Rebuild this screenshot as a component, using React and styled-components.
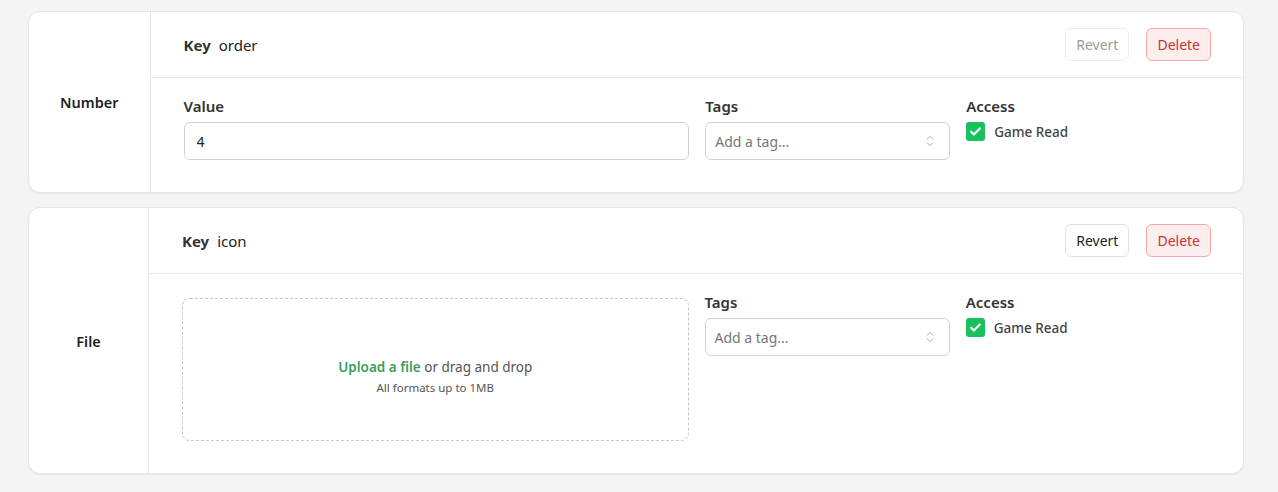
import React from 'react';
import styled, { createGlobalStyle } from 'styled-components';
import { ChevronsUpDown } from 'lucide-react';

const GlobalStyle = createGlobalStyle`
  body {
    margin: 0;
    background: #f4f4f4;
    font-family: "Noto Sans", "Open Sans", sans-serif;
    color: #333;
  }
`;

const Page = styled.div`
  display: flex;
  flex-direction: column;
  gap: 14px;
  padding: 11px 34px 18px 28px;
`;

const Card = styled.div`
  display: flex;
  background: #fff;
  border: 1px solid #e6e6e6;
  border-radius: 12px;
  box-shadow: 0 1px 2px rgba(0, 0, 0, 0.05);
`;

const TypeCell = styled.div`
  display: flex;
  align-items: center;
  justify-content: center;
  min-width: 120px;
  box-sizing: border-box;
  padding: 0 31px;
  border-right: 1px solid #e6e6e6;
  font-size: 14.5px;
  font-weight: 600;
  color: #222;
`;

const Main = styled.div`
  flex: 1;
  display: flex;
  flex-direction: column;
`;

const Header = styled.div`
  display: flex;
  align-items: center;
  justify-content: space-between;
  padding: 16px 32px 16px 33px;
  border-bottom: 1px solid #e6e6e6;
`;

const KeyLine = styled.div`
  display: flex;
  align-items: baseline;
  gap: 8px;
  font-size: 15px;
  color: #222;
`;

const KeyLabel = styled.span`
  font-weight: 700;
  color: #333;
`;

const Actions = styled.div`
  display: flex;
  gap: 17px;
`;

const Button = styled.button`
  height: 33px;
  padding: 0 10px;
  border-radius: 6px;
  font-family: inherit;
  font-size: 14px;
  background: ${(p) => (p.$danger ? '#fdeeee' : '#fff')};
  border: 1px solid ${(p) => (p.$danger ? '#f2a9a9' : p.disabled ? '#efefef' : '#e2e2e2')};
  color: ${(p) => (p.$danger ? '#c9303a' : p.disabled ? '#9a9a9a' : '#222')};
  cursor: ${(p) => (p.disabled ? 'default' : 'pointer')};
`;

const Body = styled.div`
  display: grid;
  grid-template-columns: repeat(4, 1fr);
  gap: 16px;
  padding: 18px 32px 32px 33px;
`;

const Field = styled.div`
  display: flex;
  flex-direction: column;
  gap: 6px;
  grid-column: span ${(p) => p.$span || 1};
  min-width: 0;
`;

const Label = styled.div`
  font-size: 15px;
  font-weight: 600;
  line-height: 20px;
  color: #333;
`;

const TextInput = styled.input`
  height: 38px;
  box-sizing: border-box;
  padding: 0 12px;
  border: 1px solid #d2d2d2;
  border-radius: 6px;
  font-family: inherit;
  font-size: 14px;
  color: #222;
  outline: none;
`;

const Select = styled.div`
  display: flex;
  align-items: center;
  justify-content: space-between;
  height: 38px;
  box-sizing: border-box;
  padding: 0 12px 0 9px;
  border: 1px solid #d2d2d2;
  border-radius: 6px;
  font-size: 14px;
  color: #777;
`;

const CheckRow = styled.label`
  display: flex;
  align-items: center;
  gap: 9px;
  font-size: 13.5px;
  font-weight: 500;
  color: #444;
`;

const CheckBox = styled.span`
  display: flex;
  align-items: center;
  justify-content: center;
  width: 19px;
  height: 19px;
  border-radius: 3px;
  background: #18c15e;
`;

const Dropzone = styled.div`
  grid-column: span 2;
  margin-top: 6px;
  height: 143px;
  box-sizing: border-box;
  border: 1px dashed #c8c8c8;
  border-radius: 8px;
  display: flex;
  flex-direction: column;
  align-items: center;
  justify-content: center;
  gap: 4px;
  padding-top: 14px;
`;

const DropText = styled.div`
  font-size: 13.5px;
  color: #555;
`;

const UploadLink = styled.span`
  color: #3a9e5c;
  font-weight: 600;
`;

const DropHint = styled.div`
  font-size: 11.5px;
  color: #555;
`;

const TagsField = () => (
  <Field>
    <Label>Tags</Label>
    <Select>
      Add a tag...
      <ChevronsUpDown size={14} color="#a0a0a0" strokeWidth={1.5} />
    </Select>
  </Field>
);

const AccessField = () => (
  <Field>
    <Label>Access</Label>
    <CheckRow>
      <CheckBox>
        <svg width="13" height="13" viewBox="0 0 24 24" fill="none" stroke="#fff" strokeWidth="4" strokeLinecap="round" strokeLinejoin="round">
          <path d="M4 12.5l5 5L20 6.5" />
        </svg>
      </CheckBox>
      Game Read
    </CheckRow>
  </Field>
);

const CardHeader = ({ name, canRevert }) => (
  <Header>
    <KeyLine>
      <KeyLabel>Key</KeyLabel>
      {name}
    </KeyLine>
    <Actions>
      <Button disabled={!canRevert}>Revert</Button>
      <Button $danger>Delete</Button>
    </Actions>
  </Header>
);

const App = () => (
  <>
    <GlobalStyle />
    <Page>
      <Card>
        <TypeCell>Number</TypeCell>
        <Main>
          <CardHeader name="order" />
          <Body>
            <Field $span={2}>
              <Label>Value</Label>
              <TextInput defaultValue="4" />
            </Field>
            <TagsField />
            <AccessField />
          </Body>
        </Main>
      </Card>
      <Card>
        <TypeCell>File</TypeCell>
        <Main>
          <CardHeader name="icon" canRevert />
          <Body>
            <Dropzone>
              <DropText>
                <UploadLink>Upload a file</UploadLink> or drag and drop
              </DropText>
              <DropHint>All formats up to 1MB</DropHint>
            </Dropzone>
            <TagsField />
            <AccessField />
          </Body>
        </Main>
      </Card>
    </Page>
  </>
);

export default App;
